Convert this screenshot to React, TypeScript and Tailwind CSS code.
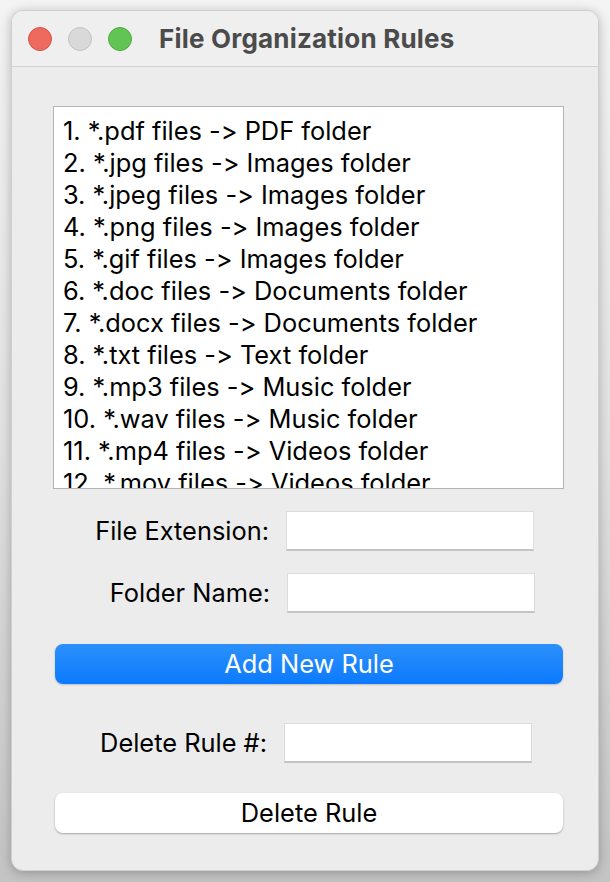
import React from 'react';

const rules = [
  '1. *.pdf files -> PDF folder',
  '2. *.jpg files -> Images folder',
  '3. *.jpeg files -> Images folder',
  '4. *.png files -> Images folder',
  '5. *.gif files -> Images folder',
  '6. *.doc files -> Documents folder',
  '7. *.docx files -> Documents folder',
  '8. *.txt files -> Text folder',
  '9. *.mp3 files -> Music folder',
  '10. *.wav files -> Music folder',
  '11. *.mp4 files -> Videos folder',
  '12. *.mov files -> Videos folder',
];

const Field: React.FC<{ label: string; labelEnd: number }> = ({ label, labelEnd }) => (
  <div className="flex items-center h-10">
    <div className="text-right text-[25.4px] leading-8 text-black whitespace-nowrap" style={{ width: labelEnd }}>
      {label}
    </div>
    <div className="ml-[17px] w-[248px] h-10 bg-white border-t border-x border-[#dcdcdc] border-b-2 border-b-[#c4c4c4]" />
  </div>
);

const App: React.FC = () => {
  return (
    <div className="w-[610px] h-[882px] overflow-hidden bg-gradient-to-b from-[#f4f4f4] via-[#e2e2e2] to-[#c4c4c4] pt-[10px] pl-[11px] font-['Inter','Liberation_Sans',sans-serif] [font-feature-settings:'calt'_0]">
      <div className="w-[588px] h-[861px] rounded-[12px] bg-[#ececec] border border-[#cfcfcf] shadow-[0_2px_12px_rgba(0,0,0,0.25)] overflow-hidden flex flex-col">
        {/* title bar */}
        <div className="h-[56px] shrink-0 bg-[#efefef] border-b border-[#d2d2d2] flex items-center pl-[16px]">
          <div className="flex gap-[16px]">
            <span className="w-6 h-6 rounded-full bg-[#ee6a5f] border border-[#d65248]" />
            <span className="w-6 h-6 rounded-full bg-[#d9d9d9] border border-[#c3c3c3]" />
            <span className="w-6 h-6 rounded-full bg-[#61c454] border border-[#4ead3e]" />
          </div>
          <div className="ml-[27px] text-[26px] font-bold text-[#4b4b4b] tracking-[0.2px]">File Organization Rules</div>
        </div>

        {/* body */}
        <div className="flex flex-col pl-[41px] pt-[39px]">
          <div className="w-[511px] h-[383px] bg-white border border-[#b4b4b4] overflow-hidden pt-[8px] pl-[9px]">
            {rules.map((r) => (
              <div key={r} className="h-8 leading-8 text-[25.4px] text-black whitespace-nowrap">
                {r}
              </div>
            ))}
          </div>

          <div className="mt-[22px] flex flex-col gap-[22px]">
            <Field label="File Extension:" labelEnd={216} />
            <Field label="Folder Name:" labelEnd={217} />
          </div>

          <button className="mt-[31px] ml-[2px] w-[508px] h-10 rounded-[8px] bg-gradient-to-b from-[#2b90fa] to-[#0a7aff] text-white text-[25.4px] shadow-[0_1px_2px_rgba(0,0,0,0.2)]">
            Add New Rule
          </button>

          <div className="mt-[39px] ml-[-2px]">
            <Field label="Delete Rule #:" labelEnd={216} />
          </div>

          <button className="mt-[30px] ml-[2px] w-[508px] h-10 rounded-[8px] bg-white text-black text-[25.4px] shadow-[0_1px_2px_rgba(0,0,0,0.3)]">
            Delete Rule
          </button>
        </div>
      </div>
    </div>
  );
};

export default App;
